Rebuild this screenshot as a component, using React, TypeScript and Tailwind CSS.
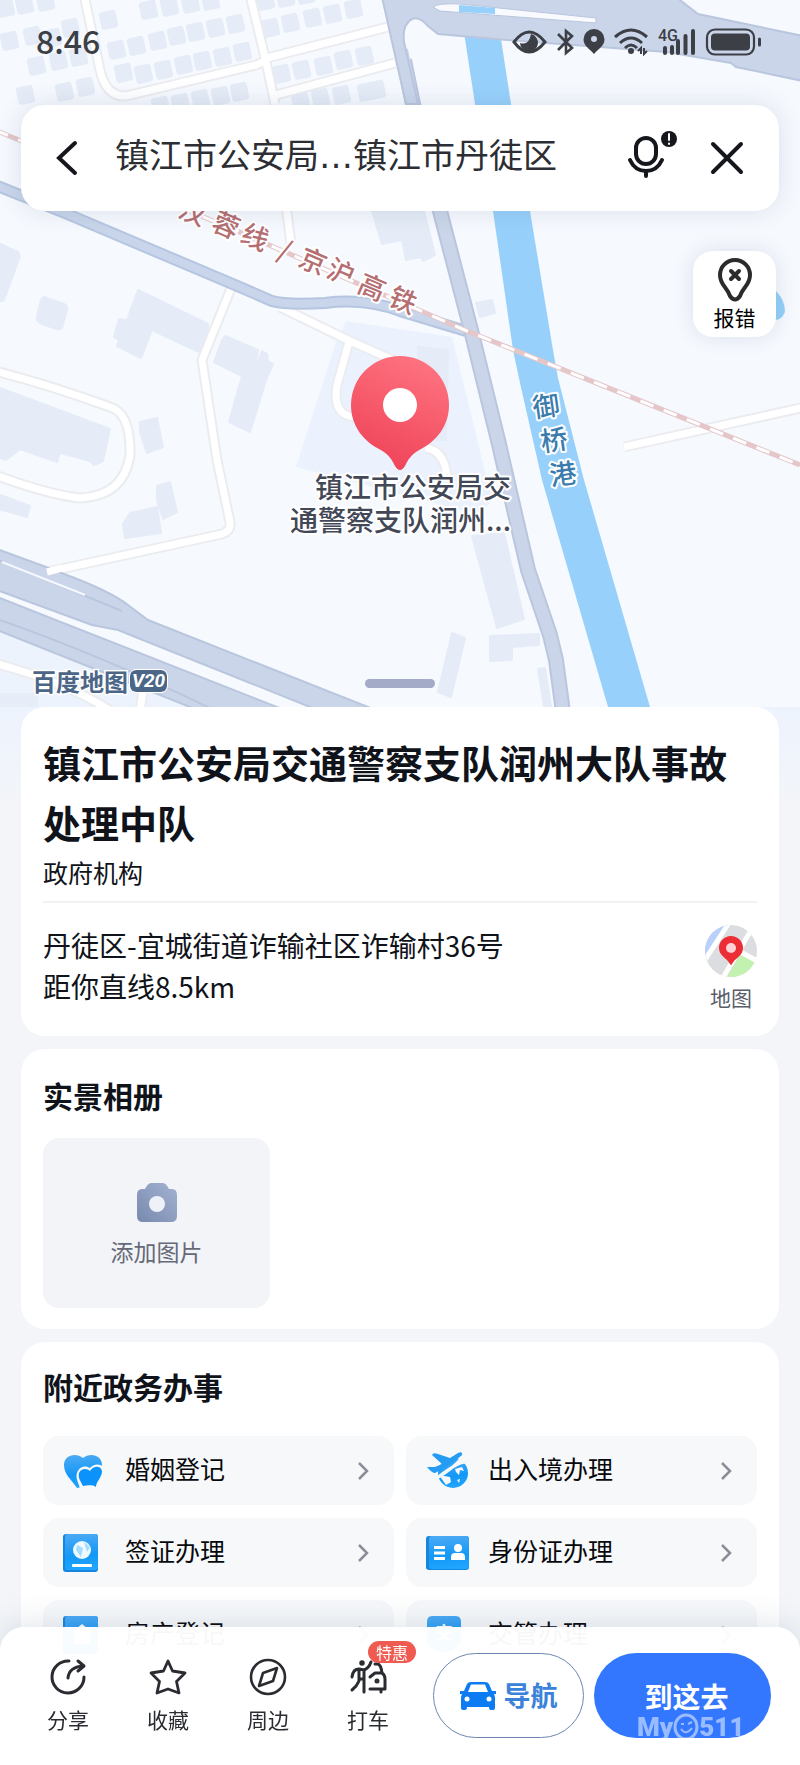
import type { ReactNode } from "react"

type Point = [number, number]

// centres of the small housing blocks north of the railway
const blocks: Point[] = [
  [5, 8], [24, 5], [45, 2], [148, 10], [169, 7], [190, 4], [210, 1],
  [108, 20], [9, 41], [32, 36], [52, 38], [70, 28],
  [116, 50], [136, 46], [157, 41], [176, 36], [195, 32], [215, 28], [235, 24],
  [36, 66], [58, 61], [78, 57], [123, 73], [143, 74], [163, 70], [183, 65], [202, 61], [222, 57], [242, 52],
  [25, 95], [64, 92], [85, 87], [160, 106], [180, 103], [200, 99], [220, 96], [239, 92],
  [265, 1], [285, -2], [305, -5], [270, 28], [290, 23], [312, 18], [332, 14], [353, 9],
  [281, 74], [301, 70], [323, 66], [343, 60], [364, 56], [300, 101], [320, 98], [341, 95], [366, 92], [376, 90],
]

const buildings = [
  "M-2 243 L18 252 L20 256 L4 300 L-2 302Z",
  "M44 297 L64 304 Q68 306 67 310 L62 328 Q60 330 56 329 L40 323 Q36 321 37 317 L41 300Z",
  "M138 290 L208 324 L208 332 L199 352 L152 330 L141 358 L117 346 L119 340 L114 337 L119 319 L127 320Z",
  "M225 336 L258 350 L254 375 L266 380 L250 432 L229 422 L242 376 L214 362 L222 340Z",
  "M262 351 L267 354 L268 361 L273 364 L266 380 L253 375Z",
  "M0 388 L110 429 L103 461 L94 465 L90 461 L60 453 L57 462 L20 449 L6 460 L0 458Z",
  "M140 422 L157 418 L163 447 L147 453 L140 432Z",
  "M-2 494 L30 506 L27 517 L-2 509Z",
  "M157 486 L170 482 L177 512 L163 519 L157 500Z",
  "M130 513 L157 507 L161 533 L125 538 L123 524Z",
  "M372 211 L424 211 L435 255 L423 261 L421 257 L406 260 L402 240 L382 244Z",
  "M476 303 L492 300 L495 313 L480 317Z",
  "M418 347 L448 350 L446 440 L415 440Z",
  "M472 536 L504 533 L524 619 L497 628Z",
  "M490 636 L539 634 L539 645 L512 647 L512 660 L490 661Z",
  "M452 633 L465 638 L451 697 L438 692Z",
  "M538 669 L545 668 L551 706 L544 706Z",
]

const whiteRoads = [
  "M84 -5 L100 70 Q106 97 126 96 L256 65 Q264 62 267 58 L388 27",
  "M250 -5 L266 62 L275 104",
  "M276 95 L395 63",
  "M286 205 L291 244",
  "M232 286 L202 360 L217 460 L230 522 Q231 531 222 534 L47 572",
  "M-5 371 Q50 385 110 407 Q131 413 130 455 Q124 496 80 498 Q50 495 -5 475",
  "M280 307 L350 341 L420 372",
  "M349 342 L337 385 Q332 415 354 417",
  "M425 448 Q445 450 447 478",
  "M624 447 L805 407",
  "M-5 663 L28 673 Q80 690 112 712",
  "M143 690 L140 712",
]

const railLabel: [string, number, number][] = [
  ["汉", 193, 212], ["蓉", 226, 225], ["线", 255, 237], ["/", 285, 250],
  ["京", 313, 261], ["沪", 341, 272], ["高", 372, 287], ["铁", 403, 300],
]

const riverLabel: [string, number, number][] = [["御", 546, 406], ["桥", 554, 440], ["港", 563, 474]]

const MapCanvas = () => (
  <svg
    aria-hidden="true"
    viewBox="0 0 800 707"
    preserveAspectRatio="xMidYMin slice"
    className="absolute inset-0 h-full w-full"
  >
    <defs>
      <linearGradient id="pin" x1="0.7" y1="0" x2="0.3" y2="1">
        <stop offset="0" stopColor="#ff7380" />
        <stop offset="1" stopColor="#ee4257" />
      </linearGradient>
    </defs>
    <rect width="800" height="707" fill="#f6f9fe" />
    <path d="M0 630 L195 707 H0Z" fill="#edf3fd" />
    <path d="M0 693 H38 V707 H0Z" fill="#e6edf8" />
    <path d="M346 321 L452 337 L492 500 L480 515 L296 467 L335 345Z" fill="#ebf2fd" />
    <g fill="#e5ecf7">
      {blocks.map(([x, y]) => (
        <rect key={`${x}-${y}`} x={x - 8} y={y - 9} width="17" height="18" rx="3" transform={`rotate(-12 ${x} ${y})`} />
      ))}
      {buildings.map((d) => (
        <path key={d} d={d} stroke="#e5ecf7" strokeWidth="2" strokeLinejoin="round" />
      ))}
    </g>
    <path d="M776 291 Q785 300 785 312 Q781 321 774 320Z" fill="#94d0fa" />

    {whiteRoads.map((d) => (
      <path key={d} d={d} fill="none" stroke="#ebecf0" strokeWidth="11" strokeLinejoin="round" />
    ))}
    {whiteRoads.map((d) => (
      <path key={d} d={d} fill="none" stroke="#fff" strokeWidth="7" strokeLinejoin="round" />
    ))}

    <path d="M459 0 H495 L511 104 L530 211 L553 350 L558 378 L584 480 L650 707 H608 L542 480 L520 383 L513 350 L493 211 L475 104Z" fill="#97d1fb" />

    {/* main roads */}
    <g fill="none">
      <path d="M-5 185 L65 213 L235 285 L272 301 Q285 305 325 303 Q365 298 400 311 L466 331" stroke="#b6c6e0" strokeWidth="12" />
      <path d="M-5 185 L65 213 L235 285 L272 301 Q285 305 325 303 Q365 298 400 311 L466 331" stroke="#c8d5ea" strokeWidth="8" />
      <path d="M404 60 L413 104 L440 211 L471 330 L498 440 L528 570 L550 635 L556 660 L563 712" stroke="#b9c6de" strokeWidth="16" strokeLinejoin="round" />
      <path d="M402 50 L413 104 L440 211 L471 330 L498 440 L528 570 L550 635 L556 660 L563 712" stroke="#cad5e9" strokeWidth="12" strokeLinejoin="round" />
    </g>
    <g fill="#cad5e9" stroke="#b9c6de" strokeWidth="2">
      <path d="M382 -3 H676 L698 14 L803 36 V81 L736 67 L731 63 L667 52 L520 41 L438 34 L428 26 Q419 16 412 19 Q402 24 404 42 L418 104 H406Z" />
      <path d="M-3 549 L46 567 L64 574 Q110 591 128 605 L148 620 L373 709 H315 L118 630 L92 625 L-3 590Z" />
      <path d="M-3 597 L282 709 H195 L-3 630Z" />
      <path d="M-3 619 Q100 655 212 709 M0 561 L122 611" fill="none" />
    </g>
    <path d="M2 562 L85 595" stroke="#f6f9fe" strokeWidth="2" />
    <path d="M47 572 L62 568" stroke="#fff" strokeWidth="7" />
    <path d="M433 7 Q437 3 460 4 L596 18 V23 L440 11Z" fill="#f8fafe" stroke="#b9c6de" />
    <path d="M459 5 L495 8 V14 L459 12Z" fill="#97d1fb" />

    {/* railway */}
    <path d="M-5 130 L230 228 L467 331 L800 465" fill="none" stroke="#e5c6c9" strokeWidth="5" />
    <path d="M-5 130 L230 228 L467 331 L800 465" fill="none" stroke="#fff" strokeWidth="3" strokeDasharray="14 11" />

    <g fontSize="27" fontWeight="500" textAnchor="middle" stroke="#fff" strokeWidth="4" strokeLinejoin="round" style={{ paintOrder: "stroke" }}>
      {railLabel.map(([char, x, y]) => (
        <text key={char} x={x} y={y + 10} transform={`rotate(23 ${x} ${y})`} fill="#b56f72">{char}</text>
      ))}
      {riverLabel.map(([char, x, y]) => (
        <text key={char} x={x} y={y + 10} transform={`rotate(-8 ${x} ${y})`} fill="#3b7cad">{char}</text>
      ))}
    </g>

    <path d="M400 356 A49 49 0 0 1 449 405 C449 427 435 442 421 449 C411 454 408 460 405 466 Q400 474 395 466 C392 460 389 454 379 449 C365 442 351 427 351 405 A49 49 0 0 1 400 356Z" fill="url(#pin)" />
    <circle cx="400" cy="405" r="17" fill="#fff" />
    <g fontSize="28" fontWeight="500" fill="#434857" textAnchor="end" stroke="#fff" strokeWidth="4" strokeLinejoin="round" style={{ paintOrder: "stroke" }}>
      <text x="511" y="498">镇江市公安局交</text>
      <text x="511" y="531">通警察支队润州...</text>
    </g>
  </svg>
)

const StatusIcons = () => (
  <svg aria-hidden="true" viewBox="0 -8 250 36" className="h-9 w-[250px]" fill="none" stroke="#3c3f45" strokeWidth="3">
    <path d="M2 14 Q17 -6 33 14 Q17 34 2 14Z" />
    <path d="M19 6 A9 9 0 1 1 8 15 Q17 18 19 6Z" fill="#3c3f45" stroke="none" />
    <path d="M46 6 L60 20 L54 25 V3 L60 8 L46 22" strokeWidth="2.6" />
    <path d="M82 1 A10.500 10.500 0 0 1 92.500 11.500 C92.500 18 86 21 82 26 C78 21 71.500 18 71.500 11.500 A10.500 10.500 0 0 1 82 1Z M82 8 A3 3 0 1 0 82 14 A3 3 0 1 0 82 8Z" fill="#3c3f45" fillRule="evenodd" stroke="none" />
    <path d="M103 9 Q119 -5 135 9 M108 15 Q119 5 130 15 M113 20 Q119 14 125 20" />
    <circle cx="119" cy="23" r="3" fill="#3c3f45" stroke="none" />
    <path d="M126 23 L129 20 V26 M132 20 V26 L135 23" strokeWidth="2" />
    <text x="146" y="13" fontSize="16" fontWeight="500" fill="#3c3f45" stroke="none" className="font-[Roboto]">4G</text>
    <path d="M153 25 V20 M160 25 V19 M166 25 V13 M173.500 25 V8 M181 25 V3" strokeWidth="4" strokeLinecap="round" />
    <rect x="195" y="1.500" width="47" height="25" rx="8" strokeWidth="2.200" />
    <rect x="199" y="5.500" width="39" height="17" rx="4" fill="#3c3f45" stroke="none" />
    <path d="M247.500 11 V17" strokeLinecap="round" />
  </svg>
)

const HeartsIcon = () => (
  <svg aria-hidden="true" viewBox="0 0 40 36" className="h-9 w-10">
    <path d="M14 35 C9 27 1 22 1 12 C1 2 13 -1 20 5 C27 -1 39 2 39 12 C39 20 32 24 30 32Z" fill="url(#blue)" />
    <path d="M17 36 C16 30 12 26 14 20 C16 13 23 12 27 15 C31 10 40 10 42 17 V36Z" fill="#f6f8fa" />
    <path d="M20 33 C17 27 15 25 16 20 C18 15 24 15 27 18 C31 12 38 13 39 18 C39 25 33 28 33 34 C28 31 24 33 20 33Z" fill="#0b93fb" />
  </svg>
)

const PlaneIcon = () => (
  <svg aria-hidden="true" viewBox="0 0 42 38" className="h-[38px] w-[42px]">
    <circle cx="27" cy="21" r="15" fill="url(#blue)" />
    <path d="M11 26 Q25 18 36 6 L39 10 Q30 11 11 26Z" fill="#f6f8fa" stroke="#f6f8fa" strokeWidth="3" />
    <path d="M13 23 L24 25 L25 30 L20 33Z M29 17 L36 15 L38 19 L34 18 L33 23 L30 20Z M31 28 L34 27 L33 31Z" fill="#f6f8fa" />
    <path d="M1 15 L9 15 L16 12 L6 3 Q7 0 12 2 L24 6 L32 1 Q37 -1 36 3 Q25 13 9 21 Q6 21 1 15Z" fill="#249cf3" />
  </svg>
)

const VisaIcon = () => (
  <svg aria-hidden="true" viewBox="0 0 36 38" className="h-[38px] w-9">
    <rect width="35" height="38" rx="3" fill="#1585df" />
    <rect x="2" width="33" height="36" rx="3" fill="url(#blue)" />
    <circle cx="19" cy="16" r="9" fill="#effaff" />
    <path d="M14 11 L20 14 L18 23 L13 16Z M21 8 L27 13 L24 18Z" fill="#a5dcff" />
    <rect x="9" y="30" width="20" height="3" rx="1" fill="#fff" />
  </svg>
)

const IdCardIcon = () => (
  <svg aria-hidden="true" viewBox="0 0 43 34" className="h-[34px] w-[43px]">
    <rect width="43" height="34" rx="3" fill="#1585df" />
    <rect x="3" width="40" height="33" rx="3" fill="url(#blue)" />
    <path d="M8 11.500 H19 M8 17 H19 M8 22.500 H19" stroke="#fff" strokeWidth="3" />
    <circle cx="32" cy="12" r="4" fill="#fff" />
    <path d="M25 24 V21 Q25 17 29 17 H35 Q39 17 39 21 V24Z" fill="#fff" />
  </svg>
)

const HouseIcon = () => (
  <svg aria-hidden="true" viewBox="0 0 36 38" className="h-[38px] w-9">
    <rect width="35" height="38" rx="3" fill="#1585df" />
    <rect x="2" width="33" height="36" rx="3" fill="url(#blue)" />
    <path d="M19 8 L30 17 H27 V28 H11 V17 H8Z" fill="#fff" />
  </svg>
)

const TrafficIcon = () => (
  <svg aria-hidden="true" viewBox="0 0 36 38" className="h-[38px] w-9">
    <path d="M6 0 H30 Q35 0 35 6 V24 Q34 33 18 37 Q2 33 1 24 V6 Q1 0 6 0Z" fill="url(#blue)" />
    <text x="18" y="23" fontSize="17" fontWeight="700" textAnchor="middle" fill="#fff">交</text>
  </svg>
)

const services: { label: string; icon: ReactNode }[] = [
  { label: "婚姻登记", icon: <HeartsIcon /> },
  { label: "出入境办理", icon: <PlaneIcon /> },
  { label: "签证办理", icon: <VisaIcon /> },
  { label: "身份证办理", icon: <IdCardIcon /> },
  { label: "房产登记", icon: <HouseIcon /> },
  { label: "交管办理", icon: <TrafficIcon /> },
]

const actions: { label: string; tag?: string; icon: ReactNode }[] = [
  {
    label: "分享",
    icon: (
      <>
        <path d="M19 2 A16 16 0 1 0 34 18" />
        <path d="M18 19 Q19 8 33 7" />
        <path d="M28 2 L34 7 L28 12" />
      </>
    ),
  },
  {
    label: "收藏",
    icon: <path d="M18 2 L22.500 12 L35 14 L26.500 22.500 L29 34 L18 30 L7 34 L9.500 22.500 L1 14 L13.500 12Z" strokeWidth="2.800" />,
  },
  {
    label: "周边",
    icon: (
      <>
        <circle cx="18" cy="18" r="17" strokeWidth="2.600" />
        <path d="M27 9 L23 22 L9 27 L13 14Z" strokeWidth="2.600" />
      </>
    ),
  },
  {
    label: "打车",
    tag: "特惠",
    icon: (
      <>
        <circle cx="12" cy="4" r="2" fill="currentColor" strokeWidth="1.500" />
        <path d="M2 18 Q3 10 9 10 L14 11 Q19 9 21 3 M9 11 V22 Q7 27 2 31 M14 12 V33 M9 20 H14" />
        <path d="M25 5 H28 Q31 6 32 14 Q35 16 35 20 V30 H20 M25 14 H32 M20 18 L25 14 M31 30 V33" />
        <circle cx="27" cy="22" r="1" fill="currentColor" />
      </>
    ),
  },
]

const App = () => {
  return (
    <div className="relative min-h-screen bg-[#f3f5f9] font-['Noto_Sans_CJK_SC',sans-serif] text-[#10131a]">
      <svg aria-hidden="true" className="absolute h-0 w-0">
        <defs>
          <linearGradient id="blue" x1="0.5" y1="0" x2="0.6" y2="1">
            <stop offset="0" stopColor="#4aa9f4" />
            <stop offset="0.6" stopColor="#1298f6" />
            <stop offset="1" stopColor="#22a6ff" />
          </linearGradient>
        </defs>
      </svg>

      <header className="relative flex min-h-[707px] flex-col">
        <MapCanvas />

        <div className="relative flex h-[105px] items-start justify-between pt-5 pr-[38px] pl-9">
          <span className="text-[32px] leading-10 font-medium text-[#3c3f45]">8:46</span>
          <StatusIcons />
        </div>

        <form className="relative mx-[21px] flex h-[106px] items-center rounded-3xl bg-white px-[34px] shadow-[0_0_24px_rgba(60,80,120,0.15)]">
          <button type="button" aria-label="返回" className="shrink-0">
            <svg viewBox="0 0 24 36" className="h-9 w-6" fill="none" stroke="#15171c" strokeWidth="4" strokeLinecap="round">
              <path d="M20 3 L4 18 L20 33" />
            </svg>
          </button>
          <input
            aria-label="搜索地点"
            defaultValue="镇江市公安局…镇江市丹徒区"
            className="ml-9 min-w-0 flex-1 bg-transparent pb-1 font-['DejaVu_Sans','Noto_Sans_CJK_SC',sans-serif] text-[34px] text-[#2c2e33] outline-none"
          />
          <button type="button" aria-label="语音" className="mr-[30px] shrink-0 pb-2">
            <svg viewBox="0 0 52 50" className="h-[50px] w-[52px]" fill="none" stroke="#15171c" strokeWidth="4" strokeLinecap="round">
              <rect x="9" y="9" width="20" height="26" rx="10" />
              <path d="M3 31 Q8 42 19 42 Q30 42 35 31 M19 43 V47" />
              <circle cx="42" cy="10" r="8" fill="#15171c" stroke="none" />
              <path d="M42 5 V11 M42 14.500 V15" stroke="#fff" strokeWidth="2" />
            </svg>
          </button>
          <button type="button" aria-label="关闭" className="shrink-0">
            <svg viewBox="0 0 36 36" className="h-9 w-9" fill="none" stroke="#15171c" strokeWidth="4" strokeLinecap="round">
              <path d="M4 4 L32 32 M32 4 L4 32" />
            </svg>
          </button>
        </form>

        <button
          type="button"
          className="relative mt-10 mr-6 flex h-[86px] w-[83px] flex-col items-center self-end rounded-[20px] bg-white pt-[6px] text-[21px] leading-7 text-black shadow-[0_0_20px_rgba(60,80,120,0.15)]"
        >
          <svg aria-hidden="true" viewBox="0 0 36 46" className="h-[46px] w-9" fill="none" stroke="#2b2b2b" strokeWidth="4">
            <path d="M18 3 A15 15 0 0 1 33 18 C33 28 26 30 23 39 Q18 46 13 39 C10 30 3 28 3 18 A15 15 0 0 1 18 3Z" />
            <path d="M14 14 L22 22 M22 14 L14 22" strokeLinecap="round" />
          </svg>
          报错
        </button>

        <div className="relative mt-auto grid grid-cols-3 items-center px-8 pb-2">
          <div className="flex items-center gap-0.5 pb-1 leading-7">
            <span className="text-[24px] font-bold text-[#4c6688] [-webkit-text-stroke:3px_white] [paint-order:stroke]">百度地图</span>
            <span className="rounded-md bg-[#4c6688] px-0.5 font-['Roboto'] text-[19px] leading-[22px] font-bold text-white italic outline outline-white">V20</span>
          </div>
          <div className="h-[9px] w-[70px] justify-self-center rounded-full bg-[#a4abc8]" />
        </div>
      </header>

      <main className="flex flex-col gap-[13px] bg-[linear-gradient(#edf3fd,#f3f5f9_100px)] px-[21px]">
        <section className="rounded-3xl bg-white px-[22px] pt-[25px] pb-[21px]">
          <h1 className="text-[38px] leading-[60px] font-bold">镇江市公安局交通警察支队润州大队事故处理中队</h1>
          <p className="pb-[9px] text-[25px] leading-10">政府机构</p>
          <div className="flex items-start justify-between border-t-2 border-[#f1f2f4] pt-[22px]">
            <p className="text-[28px] leading-[41px]">
              丹徒区-宜城街道诈输社区诈输村36号
              <br />
              距你直线8.5km
            </p>
            <a href="#map" className="flex flex-col items-center gap-0.5 text-[21px] leading-9 text-[#5a5e6c]">
              <svg aria-hidden="true" viewBox="0 0 52 52" className="h-[52px] w-[52px]">
                <clipPath id="disc"><circle cx="26" cy="26" r="26" /></clipPath>
                <g clipPath="url(#disc)">
                  <rect width="52" height="52" fill="#dcdde0" />
                  <path d="M0 0 H26 L0 38Z" fill="#b9d0fa" />
                  <path d="M36 28 L56 38 V56 H20Z" fill="#c3f1b0" />
                  <path d="M24 -2 L-2 38 M48 2 L16 56 M34 26 L56 38" stroke="#fff" strokeWidth="5" />
                </g>
                <path d="M26 11 A12 12 0 0 1 38 23 C38 31 30 33 27 39 Q26 41 25 39 C22 33 14 31 14 23 A12 12 0 0 1 26 11Z" fill="#ec2d36" />
                <circle cx="26" cy="23" r="5" fill="#ffd3d6" />
              </svg>
              地图
            </a>
          </div>
        </section>

        <section className="rounded-3xl bg-white px-[22px] pt-[26px] pb-[21px]">
          <h2 className="text-[30px] leading-10 font-bold">实景相册</h2>
          <button
            type="button"
            className="mt-[23px] flex h-[170px] w-[227px] flex-col items-center justify-center gap-2 rounded-2xl bg-[#f3f4f8] text-[23px] leading-8 text-[#666a78]"
          >
            <svg aria-hidden="true" viewBox="0 0 48 48" className="h-12 w-12">
              <defs>
                <linearGradient id="camera" x1="1" y1="0" x2="0" y2="1">
                  <stop offset="0" stopColor="#a3b3d3" />
                  <stop offset="1" stopColor="#7789ad" />
                </linearGradient>
              </defs>
              <path d="M9 10 H12 Q15 4 18 4 H30 Q33 4 36 10 H39 Q44 10 44 16 V37 Q44 43 38 43 H10 Q4 43 4 37 V16 Q4 10 9 10Z" fill="url(#camera)" />
              <circle cx="24" cy="25" r="8" fill="#eef2f8" />
            </svg>
            添加图片
          </button>
        </section>

        <section className="rounded-3xl bg-white px-[22px] pt-6 pb-[60px]">
          <h2 className="text-[30px] leading-10 font-bold">附近政务办事</h2>
          <div className="mt-[30px] grid grid-cols-2 gap-x-3 gap-y-[13px]">
            {services.map((service) => (
              <a
                key={service.label}
                href="#service"
                className="flex h-[69px] items-center rounded-2xl bg-[#f6f8fa] pr-[25px] pl-5 text-[25px] text-[#08090c]"
              >
                <span className="flex w-[62px] items-center">{service.icon}</span>
                <span className="flex-1 pb-1">{service.label}</span>
                <svg aria-hidden="true" viewBox="0 0 12 20" className="h-5 w-3" fill="none" stroke="#8b8e96" strokeWidth="2.500">
                  <path d="M2 2 L10 10 L2 18" />
                </svg>
              </a>
            ))}
          </div>
        </section>
      </main>

      <footer className="fixed inset-x-0 bottom-0 flex h-[138px] items-start rounded-t-3xl bg-white/97 pt-[26px] pr-[29px] pl-[18px] shadow-[0_-4px_30px_rgba(60,80,120,0.15)]">
        <nav className="flex flex-1 pt-[6px]">
          {actions.map((action) => (
            <button key={action.label} type="button" className="relative flex flex-1 flex-col items-center gap-2 text-[21px] leading-8 text-[#2a2c31]">
              <svg
                aria-hidden="true"
                viewBox="0 0 36 36"
                className="h-9 w-9 overflow-visible"
                fill="none"
                stroke="currentColor"
                strokeWidth="3"
                strokeLinecap="round"
                strokeLinejoin="round"
              >
                {action.icon}
              </svg>
              {action.label}
              {action.tag && (
                <span className="absolute -top-[18px] left-1/2 rounded-full bg-[#ef5b50] px-2 text-[16px] leading-[22px] text-white">
                  {action.tag}
                </span>
              )}
            </button>
          ))}
        </nav>
        <div className="ml-[15px] flex gap-[10px]">
          <button type="button" className="flex h-[85px] w-[151px] items-center justify-center gap-2 rounded-full border border-[#6c86b0] bg-white text-[27px] font-bold text-[#3a82da]">
            <svg aria-hidden="true" viewBox="0 0 36 28" className="h-7 w-9">
              <path d="M11 0 H25 Q28 0 29 2 L32 9 L36 9 V12 H34 Q35 14 35 16 V26 Q35 28 33 28 H31 Q29 28 29 25 H7 Q7 28 5 28 H3 Q1 28 1 26 V16 Q1 14 2 12 H0 V9 L4 9 L7 2 Q8 0 11 0Z" fill="#0d7cf3" />
              <path d="M11 2.500 H25 L28 10 H8Z" fill="#fff" />
              <circle cx="7" cy="17" r="2.500" fill="#fff" />
              <circle cx="29" cy="17" r="2.500" fill="#fff" />
            </svg>
            导航
          </button>
          <button type="button" className="relative h-[85px] w-[177px] rounded-full bg-[#3377ff] pl-2 text-[28px] font-bold text-white">
            到这去
            <span aria-hidden="true" className="absolute top-[60px] left-[43px] flex items-center font-['Roboto'] text-[26px] leading-7 font-black text-white/50">
              My
              <svg viewBox="0 0 26 28" className="h-7 w-[26px]" fill="none" stroke="currentColor" strokeWidth="3">
                <ellipse cx="13" cy="14" rx="11" ry="12" />
                <path d="M8 16 Q13 23 19 15 M8 11 H11 M15 11 L19 9" strokeWidth="2" />
              </svg>
              511
            </span>
          </button>
        </div>
      </footer>
    </div>
  )
}

export default App
